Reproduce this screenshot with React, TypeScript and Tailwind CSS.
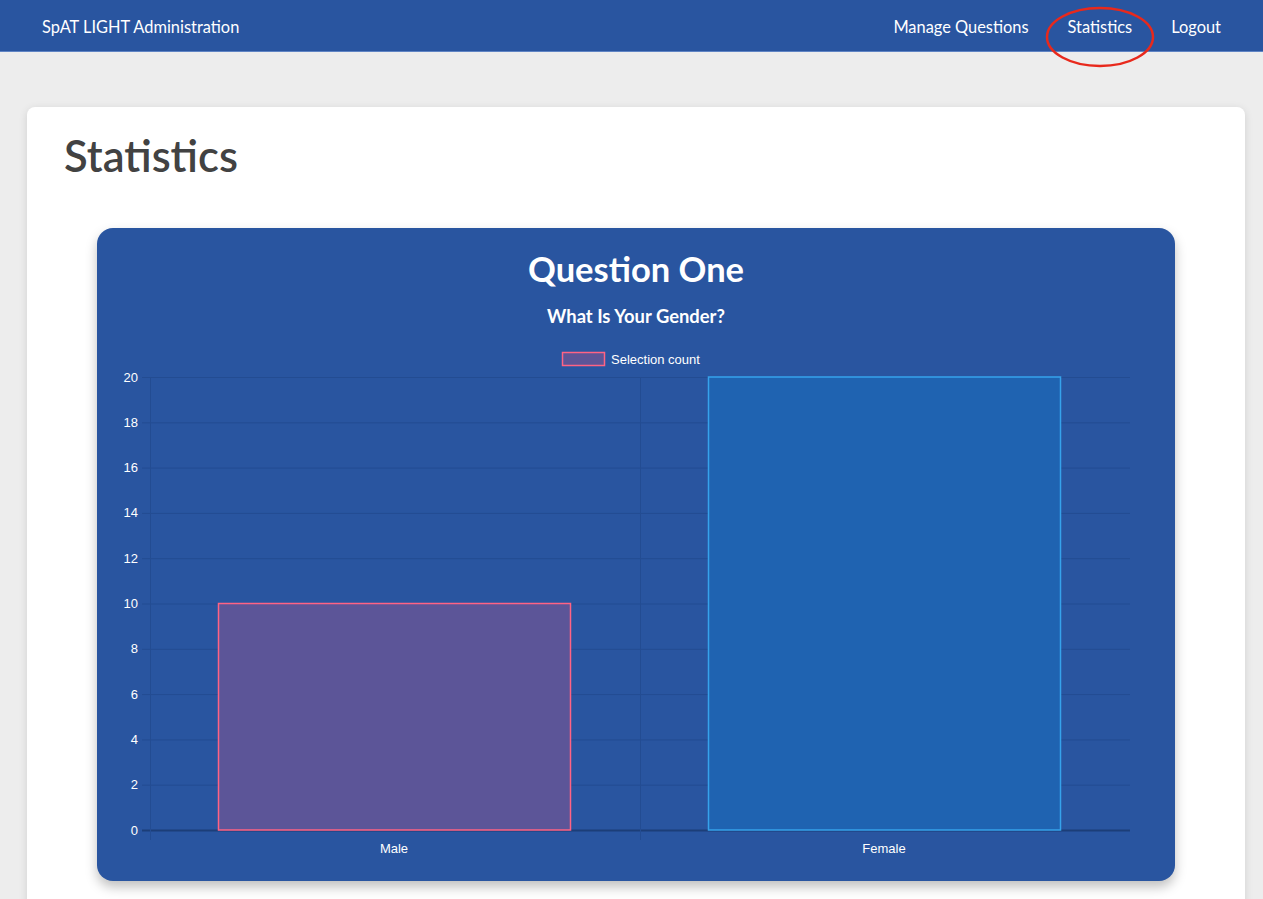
import { FC } from 'react'

const font = { fontFamily: 'Lato, "Open Sans", sans-serif' }

const ticks = [0, 2, 4, 6, 8, 10, 12, 14, 16, 18, 20]

// chart geometry, relative to the chart card
const top = 32
const bottom = 485
const left = 53
const right = 1033
const yOf = (v: number) => bottom - ((bottom - top) * v) / 20

const BarChart: FC = () => {
  return (
    <svg width="1078" height="520" className="block" style={{ fontFamily: '"Liberation Sans", Arial, sans-serif' }}>
      {/* legend */}
      <rect x="465.5" y="7.5" width="42" height="13" fill="#5c5598" stroke="#ff6384" strokeWidth="1.5" />
      <text x="514" y="19" fontSize="13" fill="#ffffff">Selection count</text>

      {/* grid */}
      {ticks.map((t) => (
        <g key={t}>
          <line x1={left - 8} x2={right} y1={yOf(t) + 0.5} y2={yOf(t) + 0.5} stroke={t === 0 ? '#1c3e78' : '#234c92'} strokeWidth={t === 0 ? 2 : 1} />
          <text x="41" y={yOf(t) + 4.5} fontSize="13" fill="#ffffff" textAnchor="end">{t}</text>
        </g>
      ))}
      <line x1={left + 0.5} x2={left + 0.5} y1={top} y2={bottom + 10} stroke="#234c92" />
      <line x1={543.5} x2={543.5} y1={top} y2={bottom + 10} stroke="#234c92" />

      {/* bars */}
      <rect x="121.5" y={yOf(10)} width="352" height={bottom - yOf(10)} fill="#5c5598" stroke="#ff6384" strokeWidth="1.5" />
      <rect x="611.5" y={yOf(20)} width="352" height={bottom - yOf(20)} fill="#1f63b1" stroke="#36a2eb" strokeWidth="1.5" />

      {/* x labels */}
      <text x="297" y="508" fontSize="13" fill="#ffffff" textAnchor="middle">Male</text>
      <text x="787" y="508" fontSize="13" fill="#ffffff" textAnchor="middle">Female</text>
    </svg>
  )
}

const Navbar: FC = () => {
  return (
    <nav className="relative flex h-[52px] items-center justify-between border-b border-[#5f84c4] bg-[#2955a0] px-[42px] pt-[3px] text-[16.4px] text-white">
      <span>SpAT LIGHT Administration</span>
      <div className="flex items-center gap-[39px]">
        <a>Manage Questions</a>
        <a>Statistics</a>
        <a>Logout</a>
      </div>
      <svg className="absolute left-[1044px] top-[5px] z-10 overflow-visible" width="112" height="64">
        <ellipse cx="56" cy="32" rx="53" ry="29" fill="none" stroke="#e8291c" strokeWidth="2.5" />
      </svg>
    </nav>
  )
}

export default function App() {
  return (
    <div className="min-h-screen bg-[#ededed]" style={font}>
      <Navbar />
      <main className="pt-[55px] pl-[27px] pr-[18px]">
        <section className="rounded-lg bg-white px-[37px] pt-[20px] pb-[60px] shadow-[0_2px_8px_rgba(0,0,0,0.12)]">
          <h1 className="text-[43.5px] leading-[56px] font-semibold text-[#424242]">Statistics</h1>
          <div className="mx-[33px] mt-[45px] rounded-2xl bg-[#2955a0] pt-[19px] pb-[16px] text-white shadow-[0_6px_12px_rgba(0,0,0,0.25)]">
            <h2 className="text-center text-[34.5px] leading-[44px] font-bold">Question One</h2>
            <h3 className="mt-[12px] text-center text-[18.4px] leading-[26px] font-bold">What Is Your Gender?</h3>
            <div className="mt-[16px]">
              <BarChart />
            </div>
          </div>
        </section>
      </main>
    </div>
  )
}
